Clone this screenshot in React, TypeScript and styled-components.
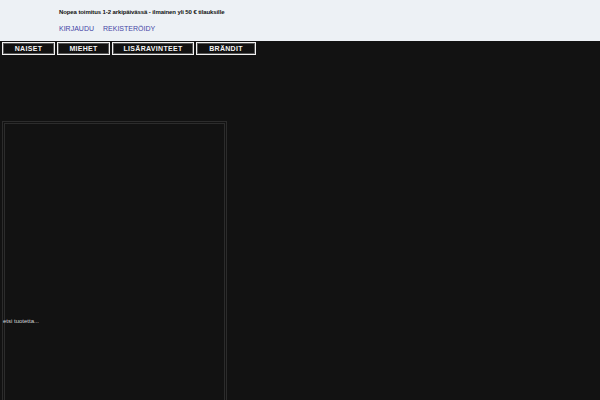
import styled, { createGlobalStyle } from 'styled-components'

const GlobalStyle = createGlobalStyle`
  html, body {
    margin: 0;
    padding: 0;
    background: #121212;
    font-family: "Liberation Sans", Arial, sans-serif;
    -webkit-font-smoothing: antialiased;
  }
`

const navItems = [
  { label: 'NAISET', width: 53 },
  { label: 'MIEHET', width: 53 },
  { label: 'LISÄRAVINTEET', width: 82 },
  { label: 'BRÄNDIT', width: 60 },
]

const App = () => {
  return (
    <>
      <GlobalStyle />
      <Page>
        <TopBar>
          <Notice>Nopea toimitus 1-2 arkipäivässä - ilmainen yli 50 € tilauksille</Notice>
          <AccountLinks>
            <AccountLink href="#">KIRJAUDU</AccountLink>
            <AccountLink href="#">REKISTERÖIDY</AccountLink>
          </AccountLinks>
        </TopBar>
        <Nav>
          {navItems.map(item => (
            <NavButton key={item.label} $width={item.width}>{item.label}</NavButton>
          ))}
        </Nav>
        <SearchFrame>
          <SearchHint>etsi tuotetta...</SearchHint>
        </SearchFrame>
      </Page>
    </>
  )
}

export default App

const Page = styled.div`
  width: 600px;
  height: 400px;
  overflow: hidden;
  background: #121212;
`
// light strip with the shipping notice and account links
const TopBar = styled.div`
  height: 41px;
  box-sizing: border-box;
  padding: 8px 0 0 59px;
  background: #edf1f5;
`
const Notice = styled.div`
  font-size: 6px;
  font-weight: bold;
  color: #111;
  line-height: 8px;
  letter-spacing: -0.1px;
`
const AccountLinks = styled.div`
  display: flex;
  gap: 9px;
  margin-top: 7px;
`
const AccountLink = styled.a`
  font-size: 7px;
  color: #4545a6;
  text-decoration: none;
  line-height: 12px;
`
const Nav = styled.div`
  display: flex;
  gap: 2px;
  padding: 1px 0 0 2px;
`
const NavButton = styled.div<{ $width: number }>`
  box-sizing: border-box;
  width: ${props => props.$width}px;
  height: 13px;
  border: 1px solid #f2f2f2;
  outline: 1px solid #555;
  outline-offset: -2px;
  background: #111;
  color: #f4f4f4;
  font-size: 7px;
  font-weight: bold;
  line-height: 11px;
  text-align: center;
  letter-spacing: 0.3px;
`
// framed area with the search placeholder
const SearchFrame = styled.div`
  box-sizing: border-box;
  width: 225px;
  height: 300px;
  margin: 66px 0 0 2px;
  border: 3px double #2c2c2c;
  padding-top: 193px;
`
const SearchHint = styled.div`
  font-size: 6px;
  color: #d6d6d6;
  line-height: 9px;
  margin-left: -2px;
`
